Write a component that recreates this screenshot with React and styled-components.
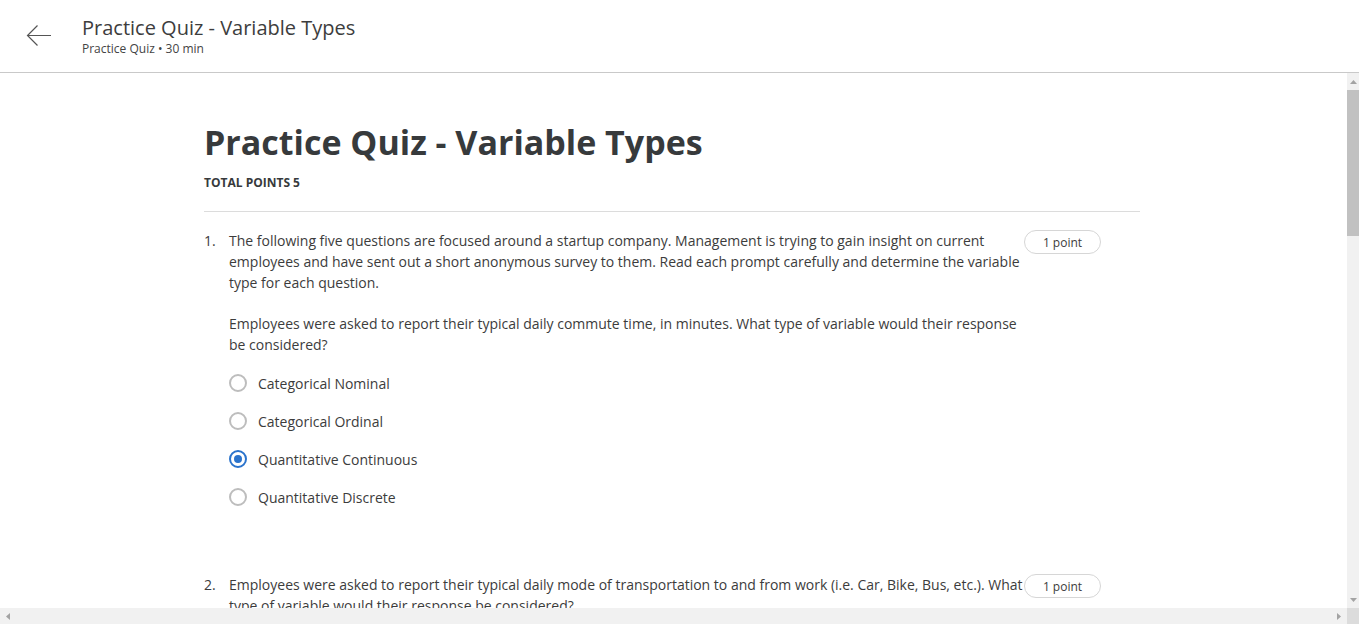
import React from 'react'
import styled, { createGlobalStyle } from 'styled-components'

const GlobalStyle = createGlobalStyle`
  html, body {
    margin: 0;
    padding: 0;
    height: 100%;
    overflow: hidden;
    background: #fff;
  }
  body {
    font-family: "Open Sans", "Liberation Sans", Arial, sans-serif;
    color: #373a3c;
  }
`

const Page = styled.div`
  height: 100vh;
  display: flex;
  flex-direction: column;
`

const Header = styled.header`
  flex: 0 0 72px;
  display: flex;
  align-items: center;
  border-bottom: 1px solid #c9c9c9;
`

const BackButton = styled.button`
  width: 82px;
  height: 72px;
  padding: 0 0 0 26px;
  border: none;
  background: transparent;
  display: flex;
  align-items: center;
  cursor: pointer;
`

const HeaderText = styled.div`
  display: flex;
  flex-direction: column;
  padding-bottom: 1px;
`

const HeaderTitle = styled.h2`
  margin: 0;
  font-size: 20px;
  font-weight: 400;
  line-height: 26px;
  color: #3d3d3d;
`

const HeaderSub = styled.span`
  font-size: 12px;
  line-height: 16px;
  color: #444;
`

const Body = styled.div`
  flex: 1;
  display: flex;
  min-height: 0;
`

const Content = styled.main`
  flex: 1;
  overflow: hidden;
`

const Column = styled.div`
  width: 936px;
  margin-left: 204px;
  padding-top: 45px;
`

const Title = styled.h1`
  margin: 0;
  font-size: 34px;
  font-weight: 700;
  line-height: 48px;
  color: #373a3c;
`

const TotalPoints = styled.div`
  margin-top: 9px;
  font-size: 12px;
  font-weight: 700;
  line-height: 16px;
  text-transform: uppercase;
  color: #373a3c;
  padding-bottom: 20px;
  border-bottom: 1px solid #dcdcdc;
`

const QuestionList = styled.ol`
  list-style: none;
  margin: 0;
  padding: 18px 0 0;
`

const Question = styled.li`
  display: grid;
  grid-template-columns: 25px 795px 77px;
  align-items: start;
  margin-bottom: 58px;
  font-size: 14px;
  line-height: 21px;
  color: #3c3c3c;
`

const Number = styled.span`
  font-size: 14px;
`

const Prompt = styled.div`
  p {
    margin: 0 0 20px;
  }
  p:last-of-type {
    margin-bottom: 0;
  }
`

const Badge = styled.span`
  height: 24px;
  box-sizing: border-box;
  border: 1px solid #d6d6d6;
  border-radius: 12px;
  display: flex;
  align-items: center;
  justify-content: center;
  font-size: 12px;
  color: #3c3c3c;
`

const Options = styled.div`
  display: flex;
  flex-direction: column;
  margin-top: 9px;
`

const Option = styled.label`
  height: 38px;
  display: flex;
  align-items: center;
  gap: 11px;
  font-size: 14px;
  color: #3c3c3c;
  cursor: pointer;
`

const Radio = styled.span`
  width: 18px;
  height: 18px;
  box-sizing: border-box;
  border-radius: 50%;
  border: 2px solid ${p => (p.checked ? '#2a73cc' : '#bdbdbd')};
  display: flex;
  align-items: center;
  justify-content: center;
  &::after {
    content: '';
    width: 8px;
    height: 8px;
    border-radius: 50%;
    background: ${p => (p.checked ? '#2a73cc' : 'transparent')};
  }
`

const VScroll = styled.div`
  flex: 0 0 12px;
  background: #f1f1f1;
  display: flex;
  flex-direction: column;
  align-items: center;
`

const Arrow = styled.div`
  flex: 0 0 17px;
  display: flex;
  align-items: center;
  justify-content: center;
  width: 100%;
`

const VThumb = styled.div`
  width: 100%;
  height: 146px;
  background: #c1c1c1;
`

const Spacer = styled.div`
  flex: 1;
`

const HScroll = styled.div`
  flex: 0 0 16px;
  display: flex;
  background: #f1f1f1;
`

const HArrow = styled.div`
  width: 16px;
  display: flex;
  align-items: center;
  justify-content: center;
`

const Corner = styled.div`
  width: 12px;
  background: #dcdcdc;
`

const Tri = ({ dir }) => {
  const pts = {
    up: '0,4 3.5,0 7,4',
    down: '0,0 7,0 3.5,4',
    left: '4,0 4,7 0,3.5',
    right: '0,0 0,7 4,3.5',
  }[dir]
  const horiz = dir === 'left' || dir === 'right'
  return (
    <svg width={horiz ? 4 : 7} height={horiz ? 7 : 4} viewBox={horiz ? '0 0 4 7' : '0 0 7 4'}>
      <polygon points={pts} fill="#a3a3a3" />
    </svg>
  )
}

const options = [
  'Categorical Nominal',
  'Categorical Ordinal',
  'Quantitative Continuous',
  'Quantitative Discrete',
]

export default function App() {
  return (
    <Page>
      <GlobalStyle />
      <Header>
        <BackButton aria-label="Back">
          <svg width="26" height="24" viewBox="0 0 26 24" fill="none" stroke="#555" strokeWidth="1.2">
            <path d="M25 11.5H1.5M11.5 1.5L1.5 11.5l10 10" />
          </svg>
        </BackButton>
        <HeaderText>
          <HeaderTitle>Practice Quiz - Variable Types</HeaderTitle>
          <HeaderSub>Practice Quiz • 30 min</HeaderSub>
        </HeaderText>
      </Header>
      <Body>
        <Content>
          <Column>
            <Title>Practice Quiz - Variable Types</Title>
            <TotalPoints>Total points 5</TotalPoints>
            <QuestionList>
              <Question>
                <Number>1.</Number>
                <Prompt>
                  <p>
                    The following five questions are focused around a startup company. Management is trying to gain insight on current
                    employees and have sent out a short anonymous survey to them. Read each prompt carefully and determine the variable
                    type for each question.
                  </p>
                  <p>
                    Employees were asked to report their typical daily commute time, in minutes. What type of variable would their response
                    be considered?
                  </p>
                  <Options>
                    {options.map((o, i) => (
                      <Option key={o}>
                        <Radio checked={i === 2} />
                        {o}
                      </Option>
                    ))}
                  </Options>
                </Prompt>
                <Badge>1 point</Badge>
              </Question>
              <Question>
                <Number>2.</Number>
                <Prompt>
                  <p>
                    Employees were asked to report their typical daily mode of transportation to and from work (i.e. Car, Bike, Bus, etc.). What
                    type of variable would their response be considered?
                  </p>
                </Prompt>
                <Badge>1 point</Badge>
              </Question>
            </QuestionList>
          </Column>
        </Content>
        <VScroll>
          <Arrow><Tri dir="up" /></Arrow>
          <VThumb />
          <Spacer />
          <Arrow><Tri dir="down" /></Arrow>
        </VScroll>
      </Body>
      <HScroll>
        <HArrow><Tri dir="left" /></HArrow>
        <Spacer />
        <HArrow><Tri dir="right" /></HArrow>
        <Corner />
      </HScroll>
    </Page>
  )
}
